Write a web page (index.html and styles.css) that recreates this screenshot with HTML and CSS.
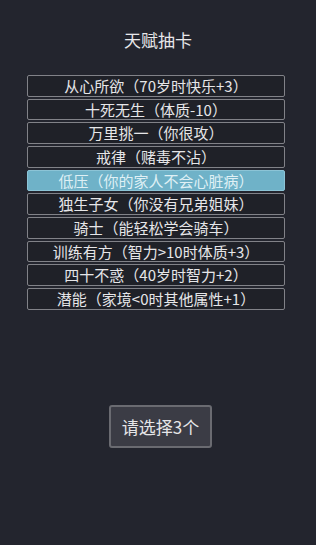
FILE: index.html
```html
<!DOCTYPE html>
<html lang="zh">
<head>
<meta charset="utf-8">
<link rel="stylesheet" href="styles.css">
</head>
<body>
<div class="screen">
  <h1 class="title">天赋抽卡</h1>
  <ul class="talents">
    <li class="talent">从心所欲（70岁时快乐+3）</li>
    <li class="talent">十死无生（体质-10）</li>
    <li class="talent">万里挑一（你很攻）</li>
    <li class="talent">戒律（赌毒不沾）</li>
    <li class="talent selected">低压（你的家人不会心脏病）</li>
    <li class="talent">独生子女（你没有兄弟姐妹）</li>
    <li class="talent">骑士（能轻松学会骑车）</li>
    <li class="talent">训练有方（智力&gt;10时体质+3）</li>
    <li class="talent">四十不惑（40岁时智力+2）</li>
    <li class="talent">潜能（家境&lt;0时其他属性+1）</li>
  </ul>
  <div class="actions">
    <button class="choose">请选择3个</button>
  </div>
</div>
</body>
</html>
```
FILE: styles.css
```css
html, body {
  margin: 0;
  padding: 0;
  background: #23252e;
}
body {
  font-family: "Noto Sans CJK SC", "Noto Sans", sans-serif;
  color: #e2e2e4;
}
.screen {
  width: 316px;
  height: 545px;
  display: flex;
  flex-direction: column;
  align-items: center;
}
.title {
  margin: 27px 0 0;
  height: 26px;
  line-height: 26px;
  font-size: 17px;
  font-weight: normal;
  color: #e8e8ea;
}
.talents {
  list-style: none;
  margin: 22px 0 0 27px;
  padding: 0;
  width: 258px;
  align-self: flex-start;
  display: flex;
  flex-direction: column;
  gap: 2px;
}
.talent {
  box-sizing: border-box;
  height: 21.67px;
  line-height: 19.5px;
  border: 1px solid #818288;
  border-radius: 2px;
  background: #1f2128;
  text-align: center;
  font-size: 15px;
  color: #e6e6e8;
  white-space: nowrap;
}
.talent.selected {
  background: #6fb2c8;
  border-color: #8cc4d6;
  color: #dff0f5;
}
.actions {
  margin-top: 95px;
  margin-left: 5px;
}
.choose {
  box-sizing: border-box;
  width: 103px;
  height: 43px;
  border: 2px solid #6a6b71;
  border-radius: 3px;
  background: #3b3c45;
  color: #e6e6e8;
  font-family: "Noto Sans CJK SC", "Noto Sans", sans-serif;
  font-size: 17px;
  padding: 0;
}
```
